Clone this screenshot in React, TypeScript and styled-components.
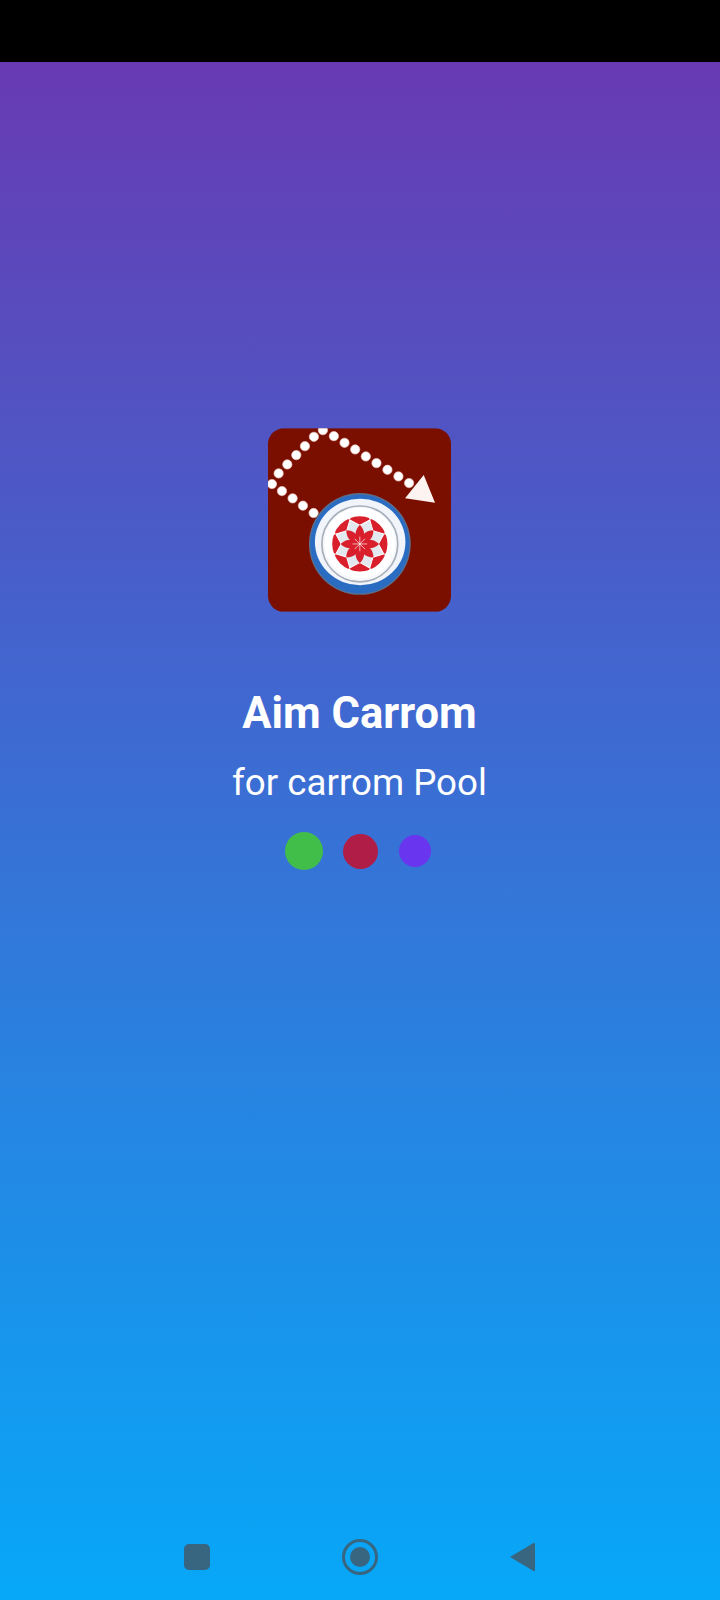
import styled, { createGlobalStyle } from 'styled-components'

const GlobalStyle = createGlobalStyle`
  html, body {
    margin: 0;
    padding: 0;
    background: #000;
  }
`

const Page = styled.div`
  width: 720px;
  height: 1600px;
  display: flex;
  flex-direction: column;
  font-family: Roboto, "Liberation Sans", sans-serif;
  color: #fff;
`

const StatusBar = styled.div`
  height: 62px;
  flex: none;
  background: #000;
`

const Splash = styled.main`
  flex: 1;
  display: flex;
  flex-direction: column;
  align-items: center;
  padding: 366px 1px 0 0;
  background: linear-gradient(180deg, #683ab3 0%, #07a8f8 100%);
`

const AppIcon = styled.svg`
  width: 183px;
  height: 184px;
  display: block;
  filter: blur(0.4px);
`

const Title = styled.h1`
  margin: 77px 0 0;
  font-size: 43.5px;
  line-height: 50px;
  font-weight: 700;
`

const Subtitle = styled.p`
  margin: 23px 0 0;
  font-size: 36.7px;
  line-height: 42px;
  font-weight: 400;
`

const Loader = styled.div`
  margin: 28px 4px 0 0;
  height: 38px;
  display: flex;
  align-items: center;
  gap: 20.5px;
`

const Dot = styled.span<{ $size: number; $color: string }>`
  width: ${(p) => p.$size}px;
  height: ${(p) => p.$size}px;
  border-radius: 50%;
  background: ${(p) => p.$color};
`

const NavBar = styled.nav`
  margin-top: auto;
  height: 88px;
  padding-top: 2px;
  box-sizing: border-box;
  display: flex;
  align-items: center;
  justify-content: center;
  gap: 131.5px;
`

const RecentKey = styled.span`
  width: 26px;
  height: 26px;
  border-radius: 5px;
  background: #386580;
`

const HomeKey = styled.span`
  width: 36px;
  height: 36px;
  box-sizing: border-box;
  border: 3px solid #386580;
  border-radius: 50%;
  display: flex;
  align-items: center;
  justify-content: center;
  &::after {
    content: '';
    width: 20px;
    height: 20px;
    border-radius: 50%;
    background: #386580;
  }
`

const BackKey = styled.svg`
  width: 26px;
  height: 30px;
  display: block;
`

const trail = [
  [12, 168], [32, 136], [58, 109], [85, 81], [111, 54], [138, 26], [165, 6],
  [198, 24], [230, 44], [262, 64], [294, 85], [326, 105], [359, 125], [392, 145], [424, 165],
  [42, 189], [74, 211], [105, 233], [137, 255],
]

const angles = [0, 45, 90, 135, 180, 225, 270, 315]

function Logo() {
  return (
    <AppIcon viewBox="0 0 550 552">
      <defs>
        <clipPath id="tile">
          <rect width="550" height="552" rx="48" />
        </clipPath>
      </defs>
      <g clipPath="url(#tile)">
        <rect width="550" height="552" fill="#7a0f00" />
        {trail.map(([x, y]) => (
          <circle key={`${x}-${y}`} cx={x} cy={y} r="14" fill="#fff" stroke="#f0c4bc" strokeWidth="2" />
        ))}
        <path d="M468 141 L502 224 L412 211 Z" fill="#fdf3f1" />

        <circle cx="276" cy="348" r="153" fill="#5d6f8a" />
        <circle cx="276" cy="348" r="149" fill="#2a6cc2" />
        <ellipse cx="277" cy="342" rx="136" ry="130" fill="#f1f4fa" />
        <circle cx="276" cy="348" r="114" fill="#f7f8fb" stroke="#a6afba" strokeWidth="5" />
        <circle cx="276" cy="345" r="106" fill="#fff" />

        <circle cx="276" cy="348" r="83" fill="#d81f2b" />
        <circle cx="276" cy="348" r="58" fill="#fff" />
        {angles.map((a) => (
          <g key={a} transform={`rotate(${a + 22.5} 276 348)`}>
            <path d="M276 268 L276 258" stroke="#fff" strokeWidth="6" />
            <path d="M276 270 L255 296 L276 316 L297 296 Z" fill="#e3e8ef" stroke="#fff" strokeWidth="3" />
          </g>
        ))}
        {angles.map((a) => (
          <path
            key={a}
            d="M276 348 Q250 318 276 290 Q302 318 276 348 Z"
            fill="#d81f2b"
            transform={`rotate(${a} 276 348)`}
          />
        ))}
        {angles.map((a) => (
          <path
            key={a}
            d="M276 348 L276 326"
            stroke="#fff"
            strokeWidth="2"
            transform={`rotate(${a} 276 348)`}
          />
        ))}
      </g>
    </AppIcon>
  )
}

export default function App() {
  return (
    <Page>
      <GlobalStyle />
      <StatusBar />
      <Splash>
        <Logo />
        <Title>Aim Carrom</Title>
        <Subtitle>for carrom Pool</Subtitle>
        <Loader>
          <Dot $size={38} $color="#41bd4a" />
          <Dot $size={35} $color="#b01e48" />
          <Dot $size={32} $color="#6a35ee" />
        </Loader>
        <NavBar>
          <RecentKey />
          <HomeKey />
          <BackKey viewBox="0 0 26 30">
            <path d="M24.5 1 L1 15 L24.5 29 Q26 29.5 26 28 L26 2 Q26 .5 24.5 1 Z" fill="#386580" />
          </BackKey>
        </NavBar>
      </Splash>
    </Page>
  )
}
